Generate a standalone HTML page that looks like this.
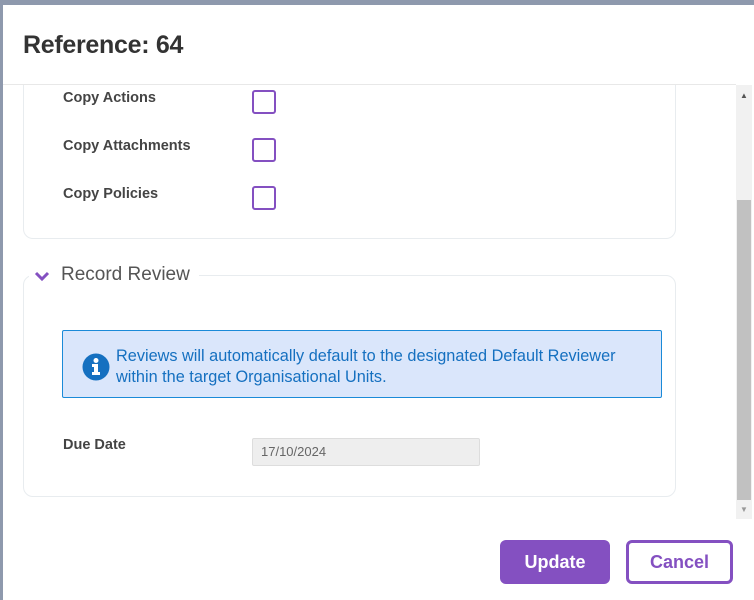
<!DOCTYPE html>
<html><head><style>
body{margin:0;width:754px;height:600px;overflow:hidden;background:#8e99ad;font-family:"Liberation Sans",sans-serif;position:relative}
.modal{position:absolute;left:3px;top:5px;width:751px;height:595px;background:#fff}
.a{position:absolute}
h1{position:absolute;left:20px;top:26px;margin:0;font-size:25px;font-weight:bold;color:#333;letter-spacing:-0.3px}
.lbl{position:absolute;left:60px;font-size:14.5px;font-weight:bold;color:#444}
.cb{position:absolute;left:249px;width:20px;height:20px;border:2px solid #8450c1;border-radius:3px}
.btn{position:absolute;top:535px;height:44px;border-radius:6px;font-size:18px;font-weight:bold;text-align:center;line-height:44px;box-sizing:border-box}
</style></head><body>
<div class="modal">
<h1>Reference: 64</h1>
<div class="a" style="left:0;top:79px;width:733px;border-top:1px solid #e8e8e8"></div>
<div class="a" style="left:20px;top:80px;width:651px;height:153px;border:1px solid #e8ecef;border-top:none;border-radius:0 0 10px 10px"></div>
<div class="lbl" style="top:85px">Copy Actions</div><div class="cb" style="top:85px"></div>
<div class="lbl" style="top:133px">Copy Attachments</div><div class="cb" style="top:133px"></div>
<div class="lbl" style="top:181px">Copy Policies</div><div class="cb" style="top:181px"></div>
<div class="a" style="left:20px;top:270px;width:651px;height:220px;border:1px solid #e8ecef;border-radius:10px"></div>
<div class="a" style="left:26px;top:259px;width:170px;height:24px;background:#fff"></div>
<svg class="a" style="left:31px;top:265px" width="16" height="12"><path d="M2 3 L8 9 L14 3" stroke="#8450c1" stroke-width="3" fill="none"/></svg>
<div class="a" style="left:58px;top:259px;font-size:19px;color:#555">Record Review</div>
<div class="a" style="left:59px;top:325px;width:598px;height:66px;background:#dae6fb;border:1px solid #1a8ad8;border-radius:2px"></div>
<svg class="a" style="left:79px;top:348px" width="28" height="28"><circle cx="14" cy="14" r="13.5" fill="#1570c0"/><circle cx="14" cy="7.5" r="2.5" fill="#fff"/><path d="M10 11 h6 v8 h2 v3 h-8 v-3 h2 v-5 h-2z" fill="#fff"/></svg>
<div class="a" style="left:113px;top:341px;font-size:16.3px;line-height:21px;color:#1570c0;white-space:nowrap">Reviews will automatically default to the designated Default Reviewer<br>within the target Organisational Units.</div>
<div class="lbl" style="top:432px">Due Date</div>
<div class="a" style="left:249px;top:433px;height:26px;background:#eee;border:1px solid #ddd;border-radius:2px;font-size:13px;color:#666;line-height:26px;padding-left:8px;width:218px">17/10/2024</div>
<div class="a" style="left:733px;top:80px;width:16px;height:434px;background:#f1f1f1"></div>
<div class="a" style="left:734px;top:195px;width:14px;height:300px;background:#c1c1c1"></div>
<div class="a" style="left:737px;top:86px;font-size:8px;color:#555">▲</div>
<div class="a" style="left:737px;top:500px;font-size:8px;color:#999">▼</div>
<div class="btn" style="left:497px;width:110px;background:#8450c1;color:#fff">Update</div>
<div class="btn" style="left:623px;width:107px;border:3px solid #8450c1;color:#8450c1;line-height:38px">Cancel</div>
</div>
</body></html>
